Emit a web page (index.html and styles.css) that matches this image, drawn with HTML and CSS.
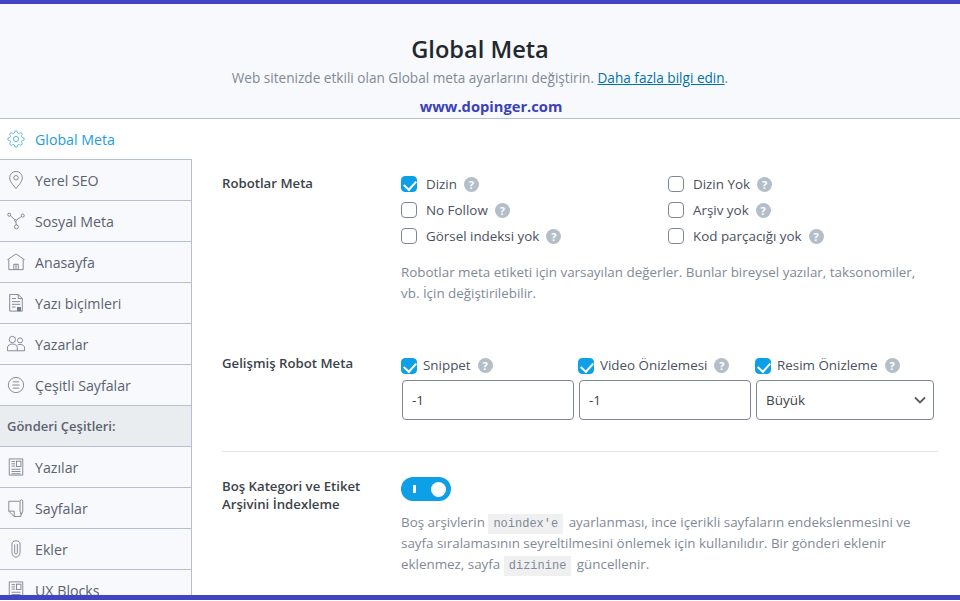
FILE: index.html
```html
<!DOCTYPE html>
<html lang="en">
<head>
    <meta charset="UTF-8">
    <meta name="viewport" content="width=device-width, initial-scale=1.0">
    <title>Global Meta</title>
    <link rel="stylesheet" href="styles.css">
</head>
<body>
    <div class="page">
        <div class="top-bar"></div>

        <header class="page-header">
            <h1>Global Meta</h1>
            <p class="intro">Web sitenizde etkili olan Global meta ayarlarını değiştirin. <a href="#">Daha fazla bilgi edin</a>.</p>
            <p class="site-link">www.dopinger.com</p>
        </header>

        <div class="main">
            <nav class="sidebar">
                <a class="nav-item active" href="#">
                    <svg class="nav-icon" viewBox="0 0 24 24"><circle cx="12" cy="12" r="3.5"/><path d="M19.4 15a1.65 1.65 0 0 0 .33 1.82l.06.06a2 2 0 0 1 0 2.83 2 2 0 0 1-2.83 0l-.06-.06a1.65 1.65 0 0 0-1.82-.33 1.65 1.65 0 0 0-1 1.51V21a2 2 0 0 1-2 2 2 2 0 0 1-2-2v-.09A1.65 1.65 0 0 0 9 19.4a1.65 1.65 0 0 0-1.82.33l-.06.06a2 2 0 0 1-2.83 0 2 2 0 0 1 0-2.83l.06-.06a1.65 1.65 0 0 0 .33-1.82 1.65 1.65 0 0 0-1.51-1H3a2 2 0 0 1-2-2 2 2 0 0 1 2-2h.09A1.65 1.65 0 0 0 4.6 9a1.65 1.65 0 0 0-.33-1.82l-.06-.06a2 2 0 0 1 0-2.83 2 2 0 0 1 2.83 0l.06.06a1.65 1.65 0 0 0 1.82.33H9a1.65 1.65 0 0 0 1-1.51V3a2 2 0 0 1 2-2 2 2 0 0 1 2 2v.09a1.65 1.65 0 0 0 1 1.51 1.65 1.65 0 0 0 1.82-.33l.06-.06a2 2 0 0 1 2.83 0 2 2 0 0 1 0 2.83l-.06.06a1.65 1.65 0 0 0-.33 1.82V9a1.65 1.65 0 0 0 1.51 1H21a2 2 0 0 1 2 2 2 2 0 0 1-2 2h-.09a1.65 1.65 0 0 0-1.51 1z"/></svg>
                    Global Meta
                </a>
                <a class="nav-item" href="#">
                    <svg class="nav-icon" viewBox="0 0 20 20"><path d="M10 19.5C7 15.5 3 12 3 7.5a7 7 0 0 1 14 0C17 12 13 15.5 10 19.5z"/><circle cx="10" cy="7.5" r="2.5"/></svg>
                    Yerel SEO
                </a>
                <a class="nav-item" href="#">
                    <svg class="nav-icon" viewBox="0 0 20 20"><circle cx="2.5" cy="3" r="1.7"/><circle cx="17.5" cy="4" r="1.7"/><circle cx="10.5" cy="16.5" r="2.2"/><circle cx="9.5" cy="9.5" r="1"/><path d="M3.8 4.2l5 4.5M16 5l-5.5 4M9.8 10.5l.5 3.8"/></svg>
                    Sosyal Meta
                </a>
                <a class="nav-item" href="#">
                    <svg class="nav-icon" viewBox="0 0 20 20"><path d="M.5 7.5L10 1l9.5 6.5M2 7v11.5h16V7M7.5 18.5v-6h5v6M10 12.5v6"/></svg>
                    Anasayfa
                </a>
                <a class="nav-item" href="#">
                    <svg class="nav-icon" viewBox="0 0 20 20"><path d="M11 19H3V.5h9.5L17 5v14h-2M12.5.5V5H17M5.5 5H10M5.5 8.5h9M5.5 11.5h9M5.5 14.5h4"/><rect class="nav-fill" x="11.5" y="15" width="3.5" height="4"/></svg>
                    Yazı biçimleri
                </a>
                <a class="nav-item" href="#">
                    <svg class="nav-icon" viewBox="0 0 20 20"><circle cx="6" cy="5" r="3.5"/><circle cx="14.5" cy="6" r="2.8"/><path d="M.5 17.5v-3c0-3 2.5-4.5 5.5-4.5s5.5 1.5 5.5 4.5v3zM11.5 17.5h8v-3c0-2.5-2-4-5-4-1 0-2 .2-2.8.6"/></svg>
                    Yazarlar
                </a>
                <a class="nav-item" href="#">
                    <svg class="nav-icon" viewBox="0 0 20 20"><circle cx="10" cy="10" r="8.5"/><path d="M6.5 6.5h7M6 10h8M6.5 13.5h7"/></svg>
                    Çeşitli Sayfalar
                </a>
                <div class="nav-heading">Gönderi Çeşitleri:</div>
                <a class="nav-item" href="#">
                    <svg class="nav-icon" viewBox="0 0 20 20"><path d="M2.5 1h15v18h-15zM5 12.5h10M5 15h10M5 17.5h10M5 4h4M5 6.5h4M5 9h4"/><rect x="10.5" y="3.5" width="5" height="6"/></svg>
                    Yazılar
                </a>
                <a class="nav-item" href="#">
                    <svg class="nav-icon" viewBox="0 0 20 20"><path d="M14 2.5H2v11l6 6h7.5v-4M2 13.5h6v6M16 1a1.5 1.5 0 0 1 1.5 1.5v11L16 17l-1.5-3.5v-11A1.5 1.5 0 0 1 16 1z"/></svg>
                    Sayfalar
                </a>
                <a class="nav-item" href="#">
                    <svg class="nav-icon" viewBox="0 0 20 20"><path d="M8.5 5v9a1.5 1.5 0 0 0 3 0V4.5M5.5 5.5V14a4.5 5 0 0 0 9 0V4.5a4.5 3.5 0 0 0-9 0v1"/></svg>
                    Ekler
                </a>
                <a class="nav-item" href="#">
                    <svg class="nav-icon" viewBox="0 0 20 20"><path d="M2.5 1h15v18h-15zM5 12.5h10M5 15h10M5 17.5h10M5 4h4M5 6.5h4M5 9h4"/><rect x="10.5" y="3.5" width="5" height="6"/></svg>
                    UX Blocks
                </a>
            </nav>

            <section class="content">
                <div class="setting setting-robots">
                    <div class="setting-label">Robotlar Meta</div>
                    <div class="setting-body">
                        <div class="check-grid">
                            <label class="check"><span class="box checked"></span>Dizin<span class="help">?</span></label>
                            <label class="check"><span class="box"></span>Dizin Yok<span class="help">?</span></label>
                            <label class="check"><span class="box"></span>No Follow<span class="help">?</span></label>
                            <label class="check"><span class="box"></span>Arşiv yok<span class="help">?</span></label>
                            <label class="check"><span class="box"></span>Görsel indeksi yok<span class="help">?</span></label>
                            <label class="check"><span class="box"></span>Kod parçacığı yok<span class="help">?</span></label>
                        </div>
                        <p class="description">Robotlar meta etiketi için varsayılan değerler. Bunlar bireysel yazılar, taksonomiler, vb. İçin değiştirilebilir.</p>
                    </div>
                </div>

                <div class="setting setting-advanced">
                    <div class="setting-label">Gelişmiş Robot Meta</div>
                    <div class="advanced-grid">
                        <div class="advanced-col">
                            <label class="check"><span class="box checked"></span>Snippet<span class="help">?</span></label>
                            <input class="field" type="text" value="-1">
                        </div>
                        <div class="advanced-col">
                            <label class="check"><span class="box checked"></span>Video Önizlemesi<span class="help">?</span></label>
                            <input class="field" type="text" value="-1">
                        </div>
                        <div class="advanced-col">
                            <label class="check"><span class="box checked"></span>Resim Önizleme<span class="help">?</span></label>
                            <div class="field select-field">Büyük
                                <svg class="chevron" viewBox="0 0 12 8"><path d="M1 1.5l5 5 5-5"/></svg>
                            </div>
                        </div>
                    </div>
                </div>

                <div class="setting setting-index">
                    <div class="setting-label">Boş Kategori ve Etiket Arşivini İndexleme</div>
                    <div class="setting-body">
                        <div class="toggle"><span class="toggle-on"></span><span class="toggle-knob"></span></div>
                        <p class="description">Boş arşivlerin <code>noindex'e</code> ayarlanması, ince içerikli sayfaların endekslenmesini ve sayfa sıralamasının seyreltilmesini önlemek için kullanılıdır. Bir gönderi eklenir eklenmez, sayfa <code>dizinine</code> güncellenir.</p>
                    </div>
                </div>
            </section>
        </div>

        <div class="bottom-bar"></div>
    </div>
</body>
</html>
```

FILE: styles.css
```css
* {
    box-sizing: border-box;
}
body {
    margin: 0;
    font-family: "Open Sans", "Noto Sans", sans-serif;
    font-size: 13.4px;
    color: #3c434a;
    background-color: #fff;
}
.page {
    display: flex;
    flex-direction: column;
    height: 601px;
    padding-bottom: 1px;
    overflow: hidden;
}
.top-bar,
.bottom-bar {
    flex: none;
    background-color: #4045c5;
}
.top-bar {
    height: 4px;
}
.bottom-bar {
    height: 5px;
}

/* Header */
.page-header {
    flex: none;
    height: 115px;
    padding-top: 28px;
    text-align: center;
    background-color: #f7f9fc;
    border-bottom: 1px solid #b6bfcd;
}
.page-header h1 {
    margin: 0;
    font-size: 23.6px;
    line-height: 34px;
    font-weight: 600;
    color: #23282d;
}
.intro {
    margin: 0;
    font-size: 13.6px;
    line-height: 24px;
    color: #7f8a98;
}
.intro a {
    color: #0073aa;
}
.site-link {
    margin: 6px 0 0 22px;
    font-size: 14.7px;
    line-height: 20px;
    font-weight: 700;
    color: #3c41b8;
}

/* Sidebar */
.main {
    flex: 1;
    display: flex;
    min-height: 0;
    overflow: hidden;
}
.sidebar {
    flex: none;
    width: 192px;
    display: flex;
    flex-direction: column;
}
.nav-item,
.nav-heading {
    flex: none;
    display: flex;
    align-items: center;
    height: 41px;
    background-color: #f7f9fc;
    border-right: 1px solid #b6bfcd;
    border-bottom: 1px solid #b6bfcd;
    color: #5a6270;
    text-decoration: none;
}
.nav-item {
    font-size: 14.2px;
    padding-left: 7px;
    gap: 10px;
}
.nav-item.active {
    background-color: #fff;
    border-right: none;
    color: #1e9ddb;
}
.nav-heading {
    padding-left: 7px;
    background-color: #e9edf0;
    font-size: 13px;
    font-weight: 600;
}
.nav-icon {
    flex: none;
    width: 18px;
    height: 18px;
    fill: none;
    stroke: #6d7482;
    stroke-width: 0.9;
}
.active .nav-icon {
    stroke: #1e9ddb;
}
.nav-fill {
    fill: #6d7482;
}

/* Settings */
.content {
    flex: 1;
    min-width: 0;
    padding: 0 22px 0 30px;
}
.setting {
    display: grid;
    grid-template-columns: 179px 1fr;
}
.setting-label {
    font-size: 13.2px;
    line-height: 18px;
    font-weight: 600;
    color: #3c434a;
}
.setting-robots {
    padding-top: 55px;
}
.setting-advanced {
    padding-top: 50px;
    padding-bottom: 31px;
    border-bottom: 1px solid #e2e4e7;
}
.setting-index {
    padding-top: 25px;
}
.check-grid {
    display: grid;
    grid-template-columns: 267px 1fr;
    row-gap: 8px;
    margin-top: 1px;
}
.check {
    display: flex;
    align-items: center;
    height: 18px;
    color: #4a5160;
}
.box {
    flex: none;
    width: 16px;
    height: 16px;
    margin-right: 9px;
    border: 1px solid #7e8694;
    border-radius: 4px;
    background-color: #fff;
}
.box.checked {
    position: relative;
    background-color: #0ea0e6;
    border-color: #0ea0e6;
}
.box.checked::after {
    content: "";
    position: absolute;
    left: 4px;
    top: 1px;
    width: 6px;
    height: 10px;
    border: solid #fff;
    border-width: 0 2.5px 2.5px 0;
    transform: rotate(42deg);
}
.help {
    flex: none;
    width: 15px;
    height: 15px;
    margin-left: 7px;
    border-radius: 50%;
    background-color: #b4bec9;
    color: #fff;
    font-size: 11px;
    line-height: 15px;
    font-weight: 700;
    text-align: center;
}
.description {
    max-width: 530px;
    margin: 0;
    line-height: 21px;
    color: #7f8a98;
}
.setting-robots .description {
    margin-top: 17px;
}
.advanced-grid {
    display: grid;
    grid-template-columns: repeat(3, 172px);
    column-gap: 5px;
    margin-top: 1px;
}
.advanced-col .check {
    height: 20px;
    margin-bottom: 5px;
}
.advanced-col .box {
    margin-top: 2px;
    margin-right: 6px;
}
.field {
    display: block;
    width: 172px;
    height: 40px;
    margin-left: 1px;
    padding: 0 9px;
    border: 1px solid #7e8694;
    border-radius: 4px;
    background-color: #fff;
    color: #3c434a;
    font-family: inherit;
    font-size: 13.5px;
}
.select-field {
    display: flex;
    align-items: center;
    justify-content: space-between;
    width: 178px;
    margin-top: 1px;
    padding: 0 7px 0 9px;
}
.chevron {
    width: 12px;
    height: 8px;
    fill: none;
    stroke: #555d66;
    stroke-width: 1.8;
}
.toggle {
    position: relative;
    width: 50px;
    height: 24px;
    border-radius: 12px;
    background-color: #0ea0e6;
}
.toggle-on {
    position: absolute;
    left: 12px;
    top: 8px;
    width: 3px;
    height: 8px;
    background-color: #fff;
}
.toggle-knob {
    position: absolute;
    left: 30px;
    top: 5px;
    width: 15px;
    height: 15px;
    border-radius: 50%;
    background-color: #fff;
}
.setting-index .description {
    margin-top: 11px;
}
code {
    margin: 0 2px 0 0;
    padding: 3px 5px;
    background-color: #f0f0f1;
    font-family: "Liberation Mono", monospace;
    font-size: 12px;
    line-height: 1;
}
```
